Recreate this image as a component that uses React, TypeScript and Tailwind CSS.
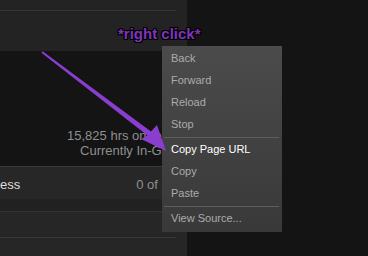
import React from "react";

const items1 = ["Back", "Forward", "Reload", "Stop"];
const items3 = ["View Source..."];

function Item({ label, active }: { label: string; active?: boolean }) {
  return (
    <div
      className={`h-[22px] pl-[9px] text-[11px] leading-[22px] whitespace-nowrap ${
        active ? "text-[#ffffff]" : "text-[#ababab]"
      }`}
    >
      {label}
    </div>
  );
}

function Sep() {
  return (
    <div className="h-[3px] pt-[2px] pl-[2px] pr-[3px]">
      <div className="h-px bg-[#5e5e5e]" />
    </div>
  );
}

export default function App() {
  return (
    <div className="relative w-[368px] h-[256px] overflow-hidden bg-[#141414] font-['Liberation_Sans',Arial,sans-serif]">
      <div className="flex flex-col w-[187px] h-full">
        {/* top section */}
        <div className="h-[51px] bg-[#232323] pt-[10px]">
          <div className="w-[176px] h-px bg-[#363636]" />
        </div>
        {/* stats */}
        <div className="h-[115px] pt-[77px] text-right text-[13px] leading-[15px] text-[#8f8f8f] whitespace-nowrap">
          <div>15,825 hrs on record</div>
          <div>Currently In-Game</div>
        </div>
        {/* progress row */}
        <div className="h-[33px] border-t border-[#3a3a3a] bg-[#272727] flex items-center justify-between pr-[11px] pt-[3px] text-[13px] leading-[15px]">
          <span className="text-[#dedede]">ess</span>
          <span className="text-[#8f8f8f]">0 of 57</span>
        </div>
        <div className="h-[12px] bg-[#212121]" />
        <div className="flex-1 border-t border-[#333333] bg-[#262626] pt-[25px]">
          <div className="w-[176px] h-px bg-[#383838]" />
        </div>
      </div>

      {/* context menu */}
      <div className="absolute left-[162px] top-[46px] w-[120px] h-[186px] pt-px bg-gradient-to-b from-[#4b4b4b] to-[#393939] font-['Liberation_Sans',Arial,sans-serif]">
        {items1.map((l) => (
          <Item key={l} label={l} />
        ))}
        <Sep />
        <Item label="Copy Page URL" active />
        <Item label="Copy" />
        <Item label="Paste" />
        <Sep />
        {items3.map((l) => (
          <Item key={l} label={l} />
        ))}
      </div>

      {/* annotation text */}
      <div className="absolute left-[118px] top-[26px] text-[15px] leading-[15px] font-bold text-[#7e35bb] whitespace-nowrap [text-shadow:-1px_-1px_0_#000,1px_-1px_0_#000,-1px_1px_0_#000,1px_1px_0_#000,0_1px_0_#000,0_-1px_0_#000,1px_0_0_#000,-1px_0_0_#000]">
        *right click*
      </div>

      {/* arrow */}
      <svg
        className="absolute left-0 top-0 pointer-events-none"
        width="368"
        height="256"
        viewBox="0 0 368 256"
      >
        <polygon
          points="42.6,51.2 151,131.5 157,125 166,151 141,139 147.5,135.5 41.4,52.8"
          fill="#8a3ecf"
        />
      </svg>
    </div>
  );
}
